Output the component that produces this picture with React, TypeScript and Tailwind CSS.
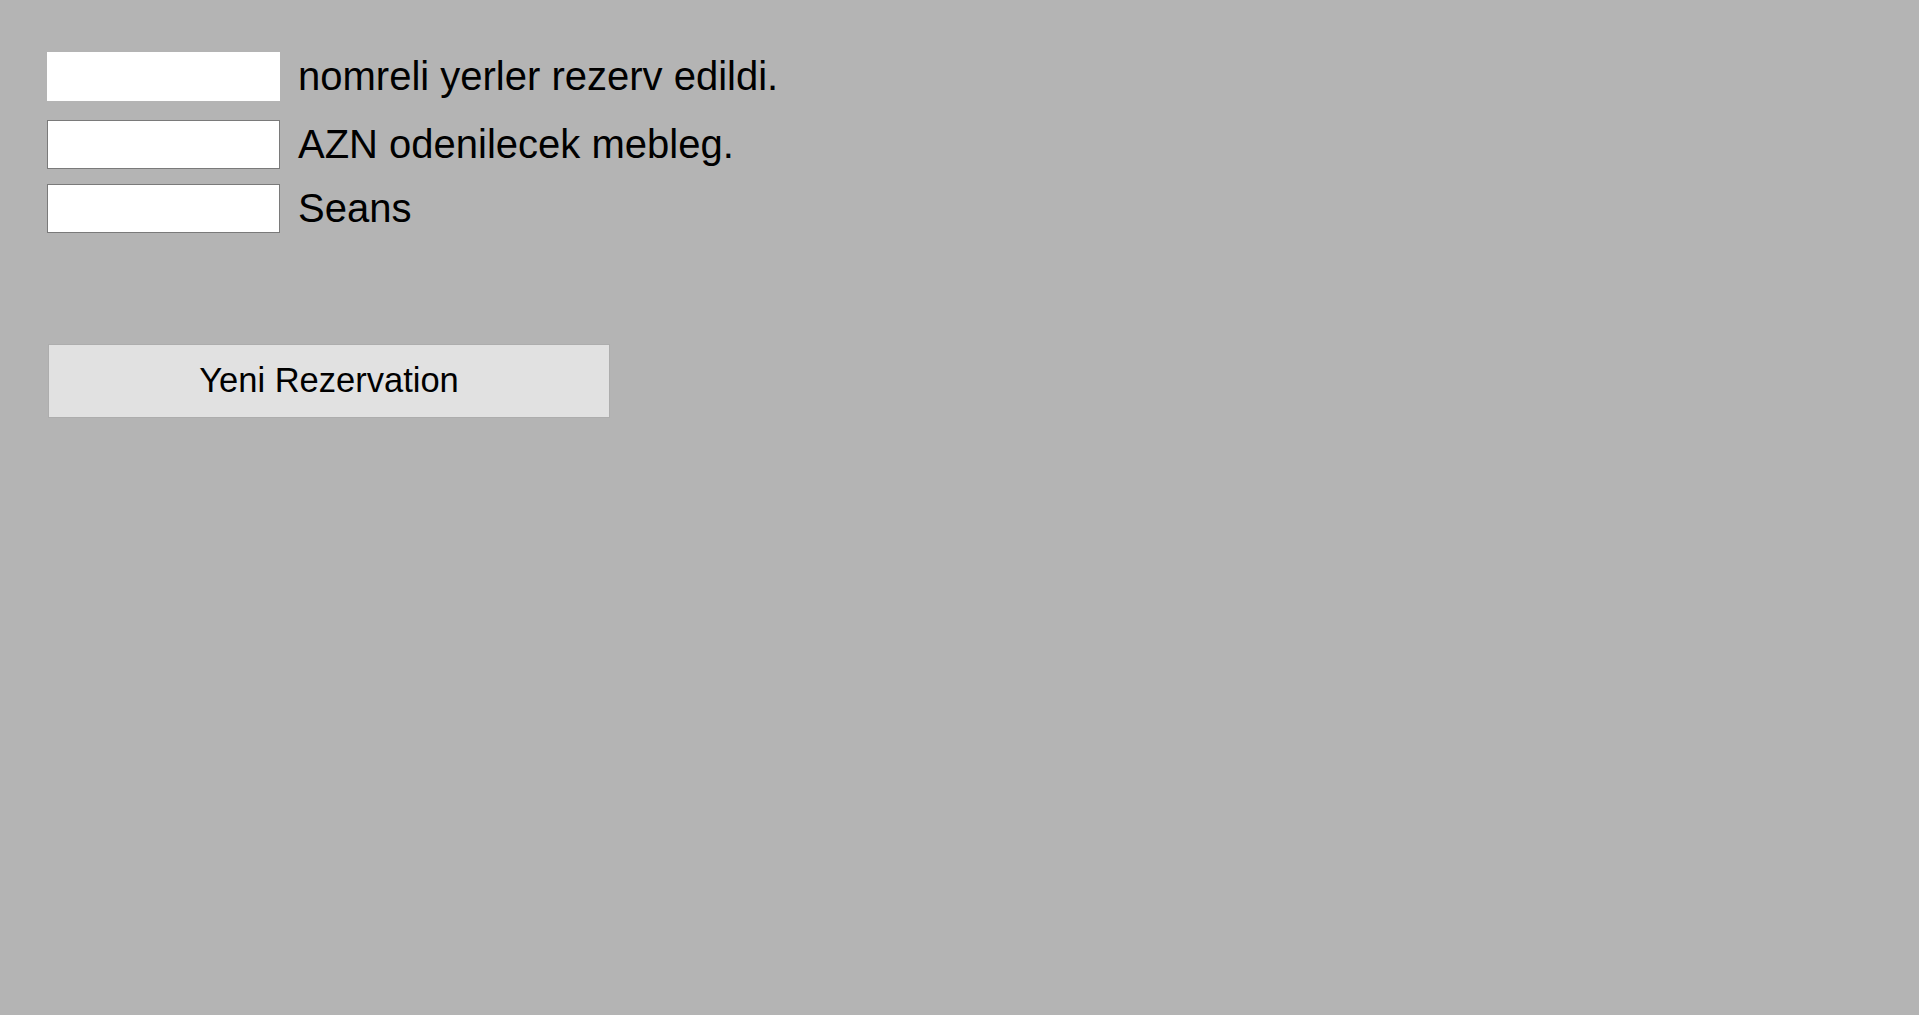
export default function App() {
  const font = { fontFamily: '"Liberation Sans", Arial, sans-serif' };
  return (
    <div className="min-h-[1015px] w-full bg-[#b4b4b4] pl-[47px] pt-[52px]" style={font}>
      <div className="flex items-center gap-[18px]">
        <input className="h-[49px] w-[233px] border border-white bg-white outline-none" />
        <span className="-mt-[2px] text-[40px] leading-none text-black">nomreli yerler rezerv edildi.</span>
      </div>
      <div className="mt-[19px] flex items-center gap-[18px]">
        <input className="h-[49px] w-[233px] border border-[#7a7a7a] bg-white outline-none" />
        <span className="-mt-[2px] text-[40px] leading-none text-black">AZN odenilecek mebleg.</span>
      </div>
      <div className="mt-[15px] flex items-center gap-[18px]">
        <input className="h-[49px] w-[233px] border border-[#7a7a7a] bg-white outline-none" />
        <span className="-mt-[2px] text-[40px] leading-none text-black">Seans</span>
      </div>
      <button className="ml-[1px] mt-[111px] flex h-[74px] w-[562px] items-center justify-center border border-[#adadad] bg-[#e1e1e1] text-[34.5px] text-black">
        Yeni Rezervation
      </button>
    </div>
  );
}
